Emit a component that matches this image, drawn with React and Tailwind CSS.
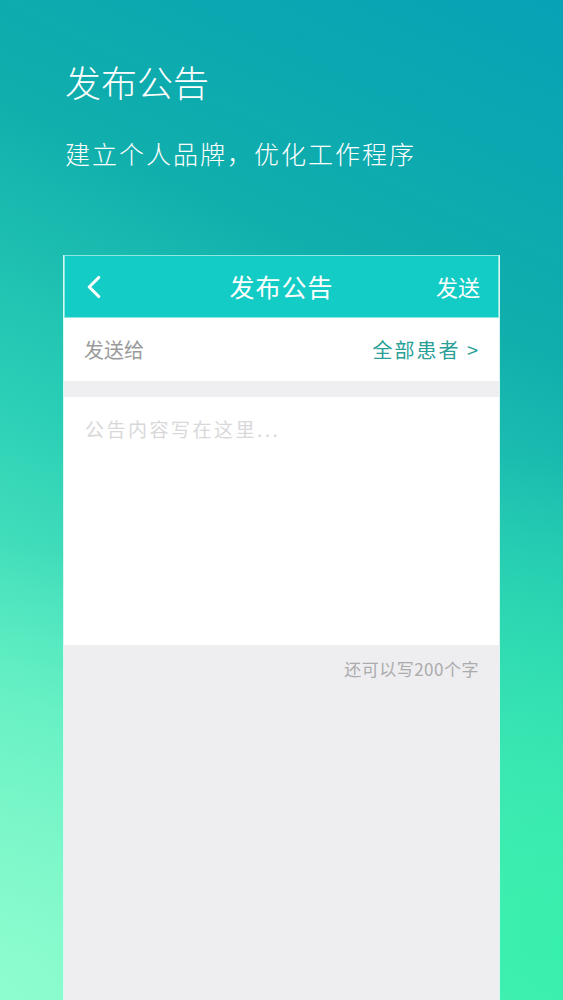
import { ChevronLeft } from "lucide-react";

const cjk = { fontFamily: '"Noto Sans CJK SC", "Noto Sans", sans-serif' };

export default function App() {
  return (
    <div
      className="relative w-[563px] h-[1000px] overflow-hidden bg-[linear-gradient(205deg,#07a2b6_0%,#10aeac_28%,#2bcfb6_52%,#55ebbf_74%,#7cf8c6_100%)]"
      style={cjk}
    >
      {/* soft light toward the lower corners */}
      <div className="pointer-events-none absolute inset-0 bg-[radial-gradient(circle_at_100%_95%,rgba(52,240,170,0.9)_0%,rgba(52,240,170,0)_45%)]" />
      <div className="pointer-events-none absolute inset-0 bg-[radial-gradient(circle_at_0%_100%,rgba(150,255,210,0.7)_0%,rgba(150,255,210,0)_40%)]" />

      <div className="relative flex flex-col h-full">
        {/* Heading */}
        <div className="pl-[65px] pt-[56px]">
          <h1 className="text-[36px] leading-[50px] font-light text-white">
            发布公告
          </h1>
          <p className="mt-[30px] text-[25px] leading-[34px] font-light text-white tracking-[2px]">
            建立个人品牌，优化工作程序
          </p>
        </div>

        {/* Phone mock */}
        <div className="mt-[85px] ml-[63px] w-[437px] flex-1 flex flex-col border-x border-[#d9f6f2]">
          {/* Nav bar */}
          <div className="h-[63px] bg-[#14ccc6] border border-[#8ae8e1] flex items-center justify-between pl-[10px] pr-[14px] text-white">
            <ChevronLeft className="w-[38px] h-[38px]" strokeWidth={2} />
            <span className="text-[25px] tracking-[1px] pl-[14px]">发布公告</span>
            <span className="text-[22px] pr-[4px]">发送</span>
          </div>

          {/* Recipient row */}
          <div className="h-[63px] bg-white flex items-center justify-between pl-[20px] pr-[19px]">
            <span className="text-[20px] text-[#9a9a9a]">发送给</span>
            <span className="text-[20px] text-[#2a9f98] tracking-[2px]">全部患者 &gt;</span>
          </div>

          <div className="h-[16px] bg-[#efeff1]" />

          {/* Text area */}
          <div className="h-[248px] bg-white px-[21px] pt-[18px]">
            <span className="text-[19px] text-[#d8d8da] tracking-[2.5px]">公告内容写在这里...</span>
          </div>

          {/* Counter */}
          <div className="flex-1 bg-[#eeedf0] flex justify-end pr-[20px] pt-[12px]">
            <span className="text-[17px] leading-[24px] text-[#ababab] tracking-[0.5px]">还可以写200个字</span>
          </div>
        </div>
      </div>
    </div>
  );
}
